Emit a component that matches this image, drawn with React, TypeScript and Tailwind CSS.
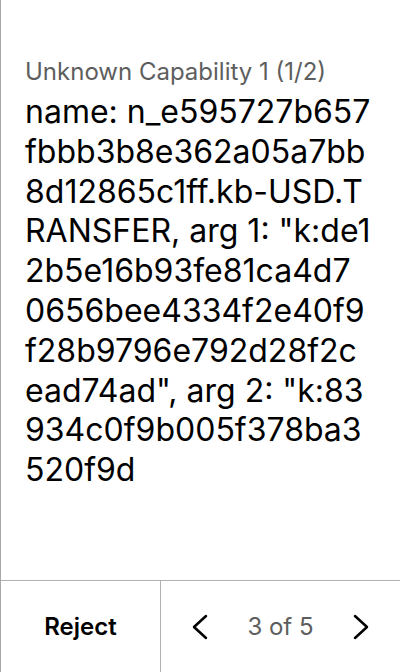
import React from 'react';

// wrapped exactly as the screen shows it
const lines = [
  'name: n_e595727b657',
  'fbbb3b8e362a05a7bb',
  '8d12865c1ff.kb-USD.T',
  'RANSFER, arg 1: "k:de1',
  '2b5e16b93fe81ca4d7',
  '0656bee4334f2e40f9',
  'f28b9796e792d28f2c',
  'ead74ad", arg 2: "k:83',
  '934c0f9b005f378ba3',
  '520f9d',
];

const App: React.FC = () => {
  return (
    <div
      className="flex h-[672px] w-[400px] flex-col border-l border-[#a8a8a8] bg-white"
      style={{ fontFamily: 'Inter, "Noto Sans", sans-serif' }}
    >
      {/* Capability content */}
      <div className="flex-1 px-6 pt-[56px]">
        <div className="text-[24px] leading-[32px] text-[#5e5e5e]">Unknown Capability 1 (1/2)</div>
        <div className="mt-[4px] text-[32px] leading-[39.8px] text-black">
          {lines.map((l, i) => (
            <div key={i} className="whitespace-pre">
              {l}
            </div>
          ))}
        </div>
      </div>

      {/* Footer */}
      <div className="flex h-[92px] border-t border-[#b0b0b0]">
        <button className="flex w-[160px] items-center justify-center border-r border-[#b0b0b0] text-[24px] font-semibold text-black">
          Reject
        </button>
        <div className="flex flex-1 items-center justify-between px-[19px]">
          <button className="flex h-10 w-10 items-center justify-center text-black">
            <svg width="18" height="28" viewBox="0 0 18 28" fill="none" stroke="currentColor" strokeWidth="2.5" strokeLinecap="round" strokeLinejoin="round">
              <path d="M15 3 L3 14 L15 25" />
            </svg>
          </button>
          <span className="text-[24px] text-[#5e5e5e]">3 of 5</span>
          <button className="flex h-10 w-10 items-center justify-center text-black">
            <svg width="18" height="28" viewBox="0 0 18 28" fill="none" stroke="currentColor" strokeWidth="2.5" strokeLinecap="round" strokeLinejoin="round">
              <path d="M3 3 L15 14 L3 25" />
            </svg>
          </button>
        </div>
      </div>
    </div>
  );
};

export default App;
